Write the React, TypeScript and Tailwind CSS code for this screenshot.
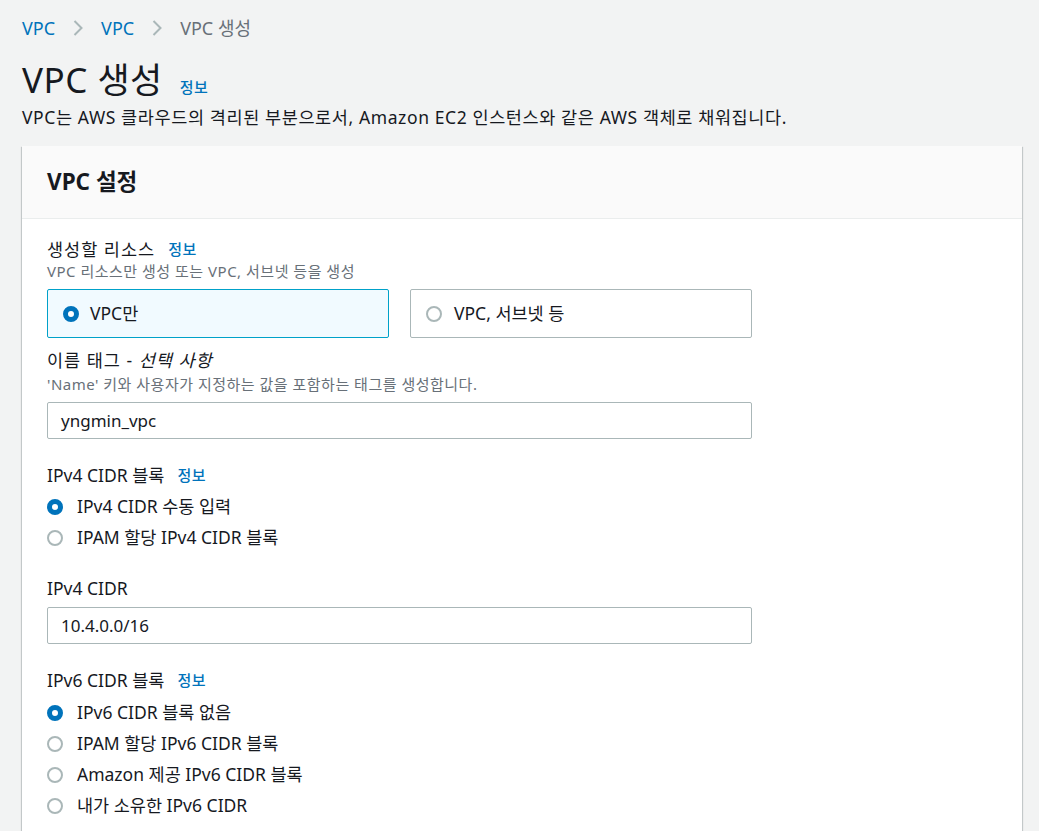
// App.tsx
// VPC 생성 form page (AWS console style)

type RadioProps = { checked?: boolean };

function Radio({ checked }: RadioProps) {
  return checked ? (
    <span className="inline-block w-4 h-4 shrink-0 rounded-full border-[5px] border-[#0073bb] bg-white" />
  ) : (
    <span className="inline-block w-4 h-4 shrink-0 rounded-full border-2 border-[#aab7b8] bg-white" />
  );
}

function Info() {
  return <span className="text-[15px] font-medium text-[#0073bb] ml-[13px] tracking-[0.5px]">정보</span>;
}

function Chevron() {
  return (
    <svg width="14" height="20" viewBox="0 0 14 20" className="mx-[16px]">
      <path d="M3.5 3l7 7-7 7" fill="none" stroke="#aab7b8" strokeWidth="2" />
    </svg>
  );
}

const radioRow = "flex items-center gap-[14px] h-[31px] text-[17.5px] text-[#16191f]";
const label = "flex items-center h-[24px] text-[17.5px] text-[#16191f]";
const desc = "h-[20px] flex items-center text-[15px] tracking-[0.5px] text-[#687078]";
const input = "h-[37px] border border-[#aab7b8] rounded-[2px] flex items-center px-[13px] text-[17px] bg-white";

export default function App() {
  return (
    <div
      className="h-[831px] bg-[#f2f3f3] text-[#16191f] overflow-hidden"
      style={{ fontFamily: '"Noto Sans", "Noto Sans CJK KR", sans-serif' }}
    >
      <div className="pl-[22px] pr-[17px]">
        {/* breadcrumb */}
        <nav className="flex items-center h-[24px] mt-[16px] text-[18px]">
          <span className="text-[#0073bb]">VPC</span>
          <Chevron />
          <span className="text-[#0073bb]">VPC</span>
          <Chevron />
          <span className="text-[#687078]">VPC 생성</span>
        </nav>

        {/* title */}
        <div className="flex items-baseline mt-[20px] h-[40px] leading-[40px]">
          <h1 className="text-[35px] font-normal tracking-[0.5px]">VPC 생성</h1>
          <span className="text-[15px] font-medium text-[#0073bb] ml-[17px] tracking-[0.5px]">정보</span>
        </div>
        <p className="text-[17.5px] tracking-[0.6px] leading-[22px] mt-[6px]">
          VPC는 AWS 클라우드의 격리된 부분으로서, Amazon EC2 인스턴스와 같은 AWS 객체로 채워집니다.
        </p>

        {/* card */}
        <div className="mt-[18px] bg-white shadow-[0_1px_1px_rgba(0,28,36,0.3),1px_1px_1px_rgba(0,28,36,0.15),-1px_1px_1px_rgba(0,28,36,0.15)]">
          <div className="h-[73px] bg-[#fafafa] border-b border-[#eaeded] flex items-center px-[25px]">
            <h2 className="text-[22.5px] font-bold">VPC 설정</h2>
          </div>

          <div className="px-[25px] pt-[18px] pb-[40px] w-[755px]">
            {/* 생성할 리소스 */}
            <div className={`${label} tracking-[1px]`}>
              생성할 리소스 <Info />
            </div>
            <div className={desc}>VPC 리소스만 생성 또는 VPC, 서브넷 등을 생성</div>
            <div className="grid grid-cols-2 gap-[21px] mt-[8px]">
              <div className="h-[49px] flex items-center gap-[11px] px-[15px] border border-[#00a1c9] bg-[#f1faff] rounded-[2px] text-[17.5px]">
                <Radio checked />
                VPC만
              </div>
              <div className="h-[49px] flex items-center gap-[12px] px-[15px] border border-[#aab7b8] bg-white rounded-[2px] text-[17.5px]">
                <Radio />
                VPC, 서브넷 등
              </div>
            </div>

            {/* 이름 태그 */}
            <div className={`${label} mt-[10px] tracking-[1px]`}>
              이름 태그 -&nbsp;<i>선택 사항</i>
            </div>
            <div className={`${desc} mt-[2px]`}>
              'Name' 키와 사용자가 지정하는 값을 포함하는 태그를 생성합니다.
            </div>
            <div className={`${input} mt-[8px]`}>yngmin_vpc</div>

            {/* IPv4 CIDR 블록 */}
            <div className={`${label} mt-[24px]`}>
              IPv4 CIDR 블록 <Info />
            </div>
            <div className="mt-[4px]">
              <div className={radioRow}>
                <Radio checked />
                IPv4 CIDR 수동 입력
              </div>
              <div className={radioRow}>
                <Radio />
                IPAM 할당 IPv4 CIDR 블록
              </div>
            </div>

            {/* IPv4 CIDR */}
            <div className={`${label} mt-[23px]`}>IPv4 CIDR</div>
            <div className={`${input} mt-[7px]`}>10.4.0.0/16</div>

            {/* IPv6 CIDR 블록 */}
            <div className={`${label} mt-[24px]`}>
              IPv6 CIDR 블록 <Info />
            </div>
            <div className="mt-[5px]">
              <div className={radioRow}>
                <Radio checked />
                IPv6 CIDR 블록 없음
              </div>
              <div className={radioRow}>
                <Radio />
                IPAM 할당 IPv6 CIDR 블록
              </div>
              <div className={radioRow}>
                <Radio />
                Amazon 제공 IPv6 CIDR 블록
              </div>
              <div className={radioRow}>
                <Radio />
                내가 소유한 IPv6 CIDR
              </div>
            </div>
          </div>
        </div>
      </div>
    </div>
  );
}
